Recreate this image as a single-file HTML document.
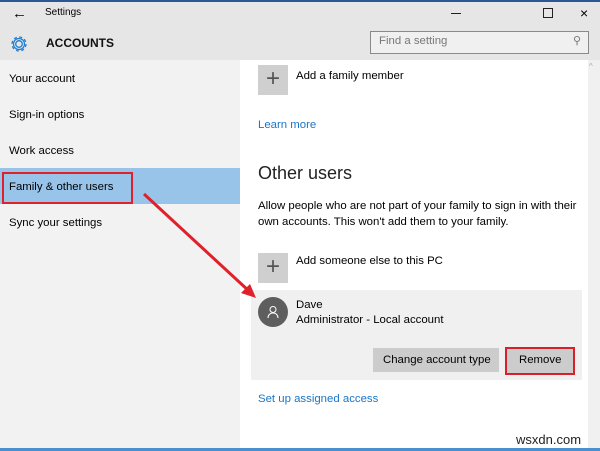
<!DOCTYPE html><html><head><style>
body{margin:0;width:600px;height:451px;overflow:hidden;font-family:"Liberation Sans",sans-serif;background:#fff;position:relative}
div,span{position:absolute}
.t{font-size:11.4px;color:#000;white-space:nowrap}
.plus{width:30px;height:30px;background:#cfcfcf;color:#555;font-size:24px;line-height:28px;text-align:center;font-weight:300}
</style></head><body>
<div style="left:0;top:0;width:600px;height:2px;background:#2b5797"></div>
<div style="left:0;top:2px;width:600px;height:58px;background:#e6e6e6"></div>
<div class="t" style="left:12px;top:5px;font-size:15px">&#8592;</div>
<div class="t" style="left:45px;top:7px;font-size:10px">Settings</div>
<div style="left:451px;top:13px;width:10px;height:1px;background:#222"></div>
<div style="left:543px;top:8px;width:8px;height:8px;border:1px solid #222"></div>
<div class="t" style="left:580px;top:5px;font-size:14px">&#215;</div>
<svg style="position:absolute;left:9px;top:34px" width="20" height="20" viewBox="0 0 20 20"><circle cx="10" cy="10" r="3.3" fill="none" stroke="#1e7bd0" stroke-width="1.3"/><circle cx="10" cy="10" r="7" fill="none" stroke="#1e7bd0" stroke-width="1.3" stroke-dasharray="3 2.5"/><circle cx="10" cy="10" r="5.5" fill="none" stroke="#1e7bd0" stroke-width="1.2"/></svg>
<div class="t" style="left:46px;top:36px;font-size:12px;font-weight:bold;color:#111">ACCOUNTS</div>
<div style="left:370px;top:31px;width:217px;height:21px;border:1px solid #8a8a8a;background:#f0f0f0"></div>
<div class="t" style="left:379px;top:35px;color:#777">Find a setting</div>
<div class="t" style="left:573px;top:34px;color:#777;font-size:11px">&#9906;</div>
<div style="left:0;top:60px;width:240px;height:388px;background:#f2f2f2"></div>
<div class="t" style="left:9px;top:73px">Your account</div>
<div class="t" style="left:9px;top:109px">Sign-in options</div>
<div class="t" style="left:9px;top:145px">Work access</div>
<div style="left:0;top:168px;width:240px;height:36px;background:#99c4ea"></div>
<div style="left:2px;top:172px;width:127px;height:28px;border:2px solid #e0202a"></div>
<div class="t" style="left:9px;top:181px">Family &amp; other users</div>
<div class="t" style="left:9px;top:217px">Sync your settings</div>
<div style="left:588px;top:60px;width:12px;height:388px;background:#f0f0f0"></div>
<div class="t" style="left:589px;top:62px;font-size:8px;color:#aaa">^</div>
<div class="plus" style="left:258px;top:65px">+</div>
<div class="t" style="left:296px;top:70px">Add a family member</div>
<div class="t" style="left:258px;top:119px;color:#1a76c8">Learn more</div>
<div class="t" style="left:258px;top:163px;font-size:18px;color:#222">Other users</div>
<div class="t" style="left:258px;top:198px;line-height:16px">Allow people who are not part of your family to sign in with their<br>own accounts. This won't add them to your family.</div>
<div class="plus" style="left:258px;top:253px">+</div>
<div class="t" style="left:296px;top:255px">Add someone else to this PC</div>
<div style="left:251px;top:290px;width:331px;height:90px;background:#f0f0f0"></div>
<div style="left:258px;top:297px;width:30px;height:30px;border-radius:50%;background:#5e5e5e"></div>
<svg style="position:absolute;left:265px;top:304px" width="16" height="16" viewBox="0 0 16 16"><circle cx="8" cy="5.5" r="3" fill="none" stroke="#fff"/><path d="M3 14c0-3 2-5 5-5s5 2 5 5" fill="none" stroke="#fff"/></svg>
<div class="t" style="left:296px;top:299px">Dave</div>
<div class="t" style="left:296px;top:314px">Administrator - Local account</div>
<div style="left:373px;top:348px;width:126px;height:24px;background:#cccccc"></div>
<div class="t" style="left:383px;top:354px">Change account type</div>
<div style="left:505px;top:347px;width:66px;height:24px;border:2px solid #d8202a;background:#ccc"></div>
<div class="t" style="left:519px;top:354px">Remove</div>
<div class="t" style="left:258px;top:393px;color:#1a76c8">Set up assigned access</div>
<div class="t" style="left:516px;top:432px;font-size:13px;color:#222">wsxdn.com</div>
<div style="left:0;top:448px;width:600px;height:3px;background:#4a8fd0"></div>
<svg style="position:absolute;left:0;top:0" width="600" height="451"><line x1="144" y1="194" x2="250" y2="292" stroke="#e0202a" stroke-width="3"/><polygon points="256,298 241,293 250,284" fill="#e0202a"/></svg>
</body></html>
